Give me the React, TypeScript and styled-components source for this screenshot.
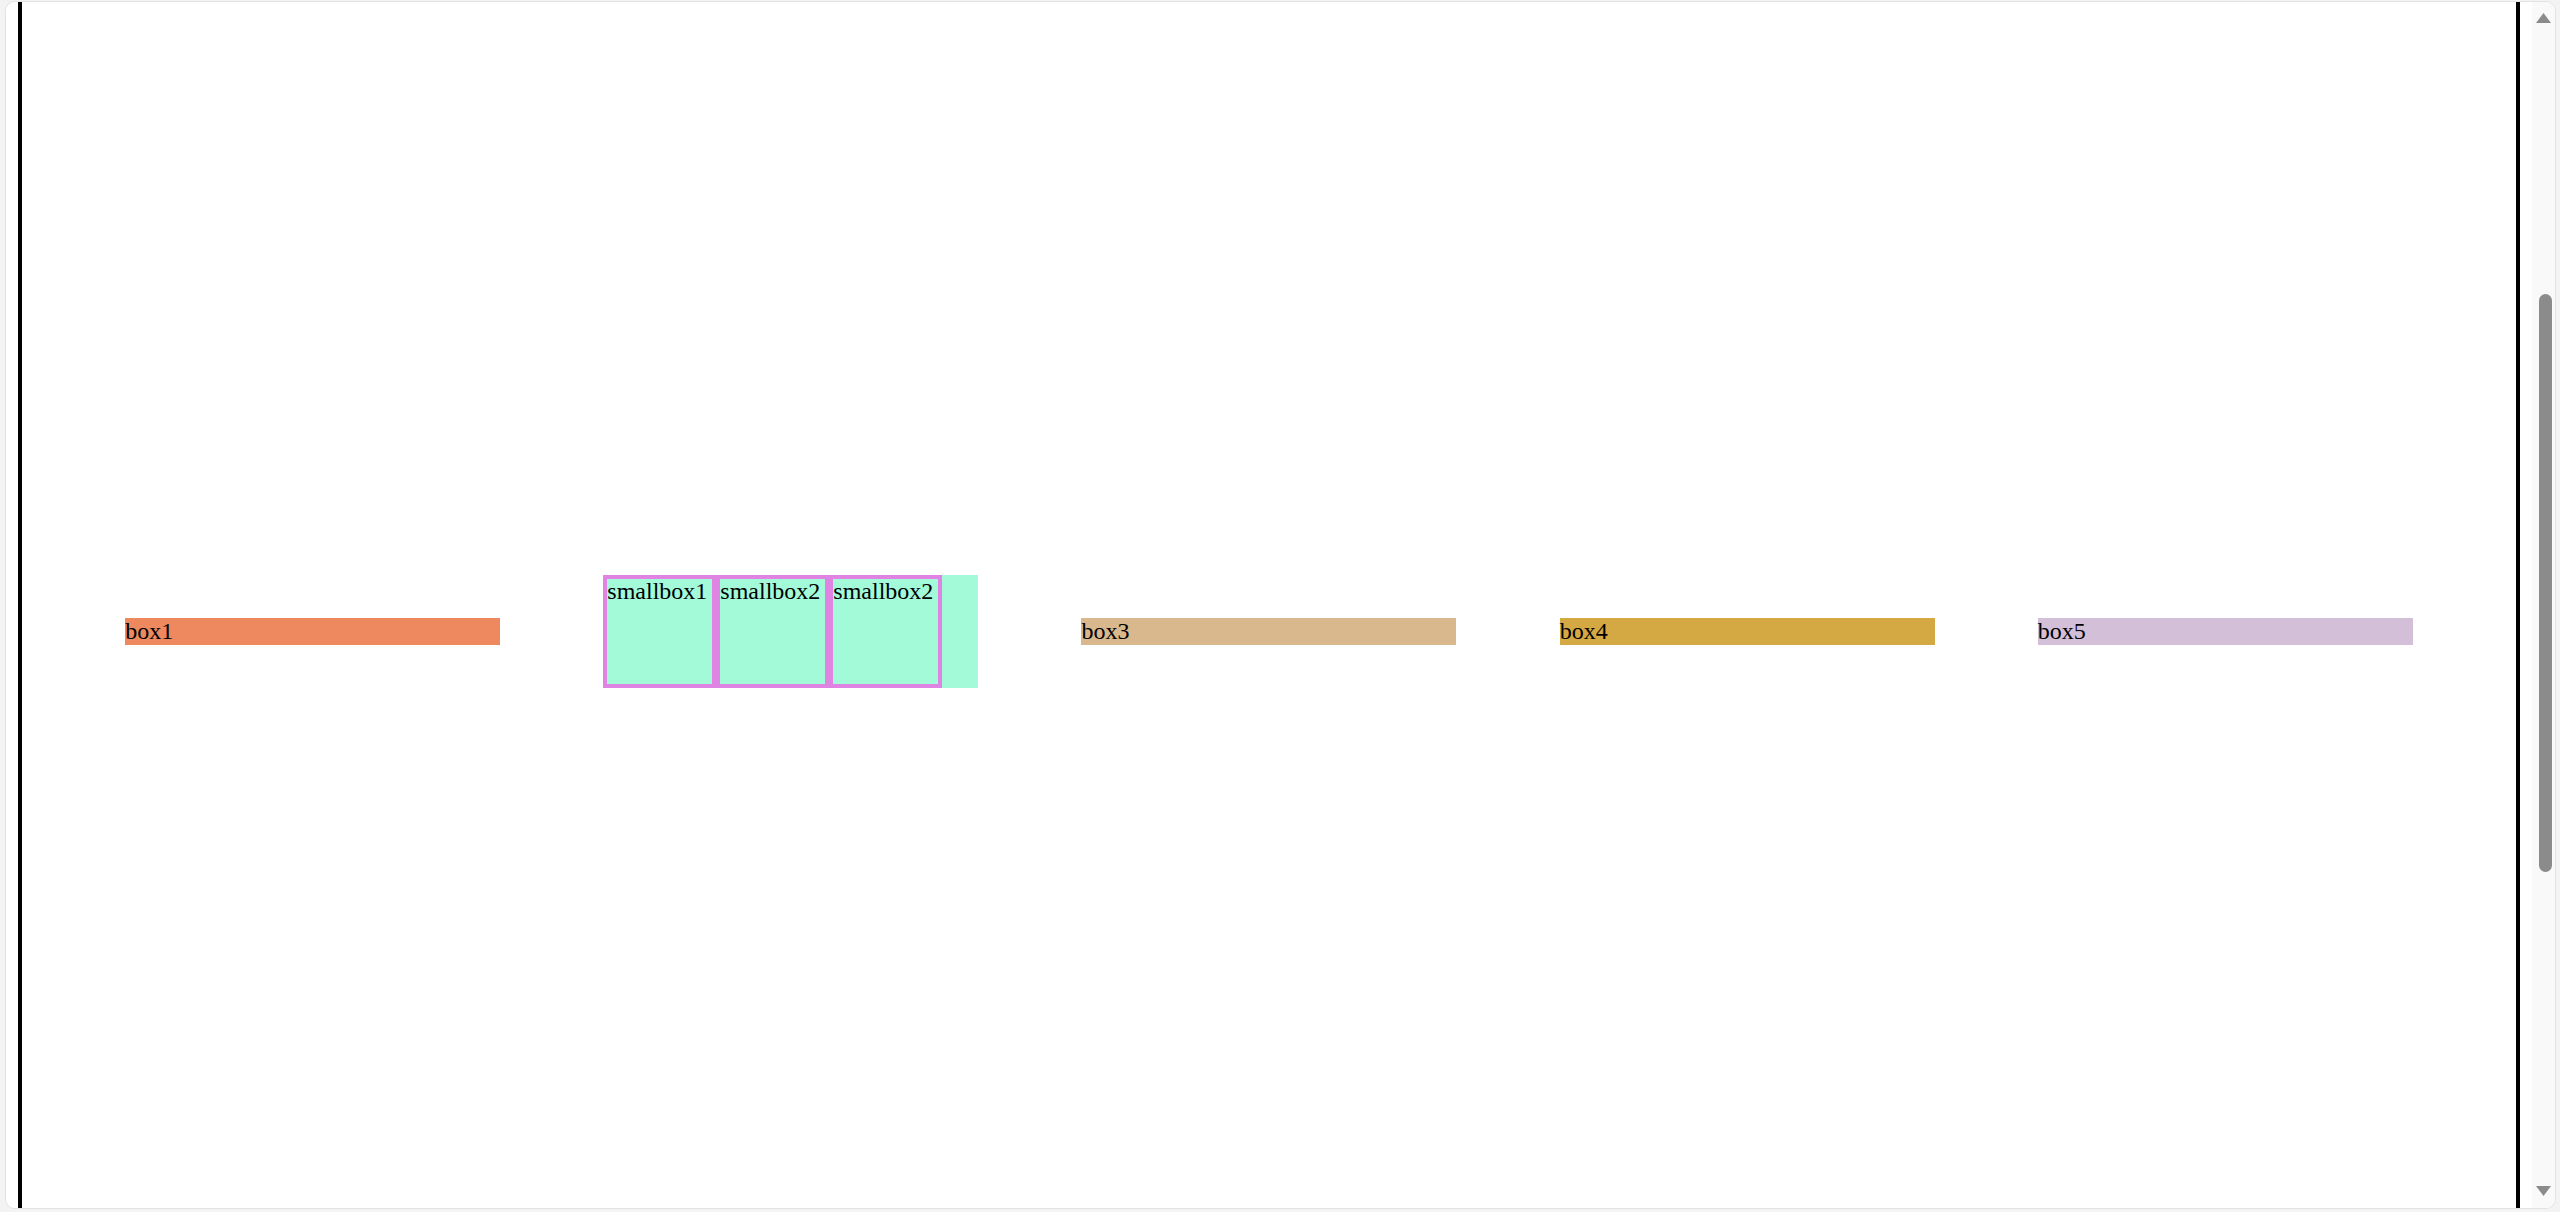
import React from "react";
import styled, { createGlobalStyle } from "styled-components";

const GlobalStyle = createGlobalStyle`
  html, body {
    margin: 0;
    padding: 0;
    background: #f3f3f3;
    height: 1212px;
    overflow: hidden;
  }
  #root {
    height: 1212px;
  }
`;

const Page = styled.div`
  box-sizing: border-box;
  height: 1212px;
  padding: 1px 4px 3px 5px;
  display: flex;
`;

const Frame = styled.div`
  flex: 1;
  display: flex;
  border: 1px solid #e2e2e2;
  border-radius: 10px;
  overflow: hidden;
  background: #ffffff;
`;

const Viewport = styled.div`
  flex: 1;
  display: flex;
  padding: 0 12px;
  background: #ffffff;
`;

const Stage = styled.div`
  flex: 1;
  display: flex;
  align-items: center;
  justify-content: space-evenly;
  border-left: 4px solid #000;
  border-right: 4px solid #000;
  padding-top: 53px;
  font-family: "Liberation Serif", "Times New Roman", serif;
  font-size: 24px;
  color: #000;
`;

const Bar = styled.div<{ $bg: string }>`
  width: 375px;
  height: 27px;
  line-height: 27px;
  background: ${(p) => p.$bg};
  white-space: nowrap;
`;

const Group = styled.div`
  width: 375px;
  height: 113px;
  display: flex;
  background: #a2fad8;
`;

const SmallBox = styled.div`
  box-sizing: border-box;
  width: 113px;
  height: 113px;
  border: 4px solid #e084e4;
  line-height: 24px;
  white-space: nowrap;
`;

const ScrollBar = styled.div`
  width: 23px;
  display: flex;
  flex-direction: column;
  align-items: center;
  background: #f9f9f9;
`;

const Arrow = styled.svg<{ $mt: number; $mb: number }>`
  width: 15px;
  height: 10px;
  margin-top: ${(p) => p.$mt}px;
  margin-bottom: ${(p) => p.$mb}px;
  flex: none;
`;

const Track = styled.div`
  flex: 1;
  width: 100%;
  display: flex;
  flex-direction: column;
  align-items: center;
`;

const Thumb = styled.div<{ $top: number; $len: number }>`
  width: 13px;
  margin-left: 4px;
  margin-top: ${(p) => p.$top}px;
  height: ${(p) => p.$len}px;
  border-radius: 7px;
  background: #8b8b8b;
`;

const bars = [
  { label: "box1", bg: "#ee885e" },
  { label: "box3", bg: "#d8b88c" },
  { label: "box4", bg: "#d4a843" },
  { label: "box5", bg: "#d4bfd8" },
];

export default function App() {
  return (
    <>
      <GlobalStyle />
      <Page>
        <Frame>
          <Viewport>
            <Stage>
              <Bar $bg={bars[0].bg}>{bars[0].label}</Bar>
              <Group>
                <SmallBox>smallbox1</SmallBox>
                <SmallBox>smallbox2</SmallBox>
                <SmallBox>smallbox2</SmallBox>
              </Group>
              {bars.slice(1).map((b) => (
                <Bar key={b.label} $bg={b.bg}>
                  {b.label}
                </Bar>
              ))}
            </Stage>
          </Viewport>
          <ScrollBar>
            <Arrow $mt={11} $mb={0} viewBox="0 0 15 10">
              <polygon points="7.5,0 15,10 0,10" fill="#8b8b8b" />
            </Arrow>
            <Track>
              <Thumb $top={271} $len={578} />
            </Track>
            <Arrow $mt={0} $mb={12} viewBox="0 0 15 10">
              <polygon points="0,0 15,0 7.5,10" fill="#8b8b8b" />
            </Arrow>
          </ScrollBar>
        </Frame>
      </Page>
    </>
  );
}
